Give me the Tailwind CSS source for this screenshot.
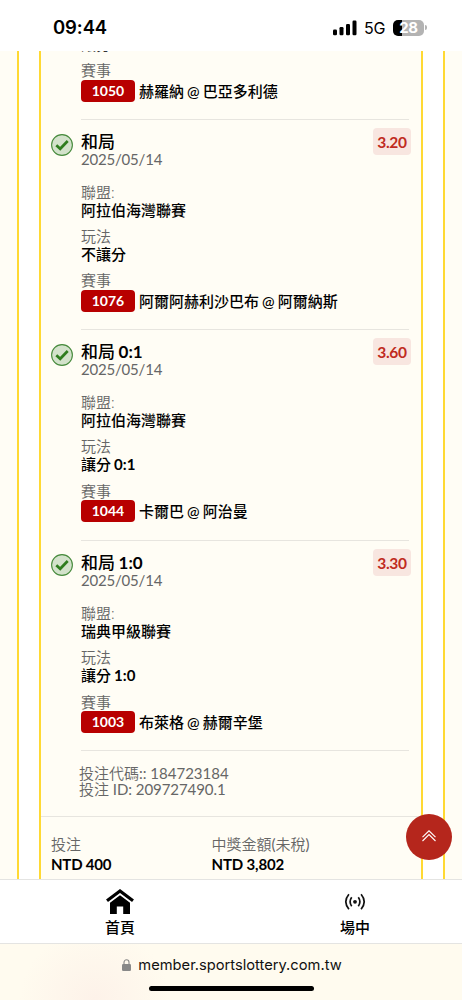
<!DOCTYPE html>
<html lang="zh-Hant">
<head>
<meta charset="utf-8">
<meta name="viewport" content="width=device-width, initial-scale=1">
<title>member.sportslottery.com.tw</title>
<script src="https://cdn.jsdelivr.net/npm/@tailwindcss/browser@4"></script>
</head>
<body class="bg-white">
<svg class="hidden">
  <symbol id="check" viewBox="0 0 22 22"><circle cx="11" cy="11" r="10.4" fill="#d3e2cb" stroke="#468a3c" stroke-width="1.1"/><path d="M5.3 11.3 9.2 14.800 16.700 7" fill="none" stroke="#2f7d1e" stroke-width="2.7"/></symbol>
</svg>
<div class="relative w-[462px] h-[1000px] overflow-hidden flex flex-col font-['Lato','Noto_Sans_CJK_TC',sans-serif] text-black">
  <header class="h-[51px] shrink-0 flex items-center pt-[4px] pl-[53px] pr-[35px] font-['Inter','Noto_Sans_CJK_TC',sans-serif]">
    <span class="text-[18.5px] font-semibold tracking-[-0.1px]">09:44</span>
    <div class="ml-auto flex items-center">
      <svg class="w-[24px] h-[16px]" viewBox="0 0 24 16"><rect x="0" y="9.5" width="4" height="5.7" rx="1.2"/><rect x="6.5" y="7" width="4" height="8.2" rx="1.2"/><rect x="13" y="4" width="4" height="11.2" rx="1.2"/><rect x="19.500" y=".5" width="4" height="14.700" rx="1.200"/></svg>
      <span class="mt-[1px] ml-[7px] w-[22px] text-[16px] tracking-[-0.3px]">5G</span>
      <div class="ml-[7px] w-[31px] h-[16px] rounded-[5px] bg-linear-to-r from-black from-[29%] to-[#b3b3b3] to-[29%] text-white text-[15px] font-bold leading-[16px] text-center tracking-[-0.3px]">28</div>
      <div class="ml-[1px] w-[2px] h-[5px] rounded-r-full bg-[#b3b3b3]"></div>
    </div>
  </header>

  <main class="h-[828px] shrink-0 overflow-hidden flex bg-[#fffdf5]">
    <div class="ml-[17.300px] w-[427.400px] h-full shrink-0 bg-white border-x-2 border-[#ffd933] pl-[19.700px] pr-[19.700px]">
      <div class="h-full w-[384px] bg-[#fffdf5] border-x-2 border-[#ffd933] flex flex-col">
        <section class="h-[69px] shrink-0 ml-[40px] mr-[12px] border-b border-[#e7e5df] text-[15px] [word-spacing:-0.7px]">
          <div class="h-[2px] overflow-hidden flex items-end font-medium leading-[18px] text-[#333]">讓分</div>
          <div class="mt-[8px] leading-[18px] font-[350] text-[#666]">賽事</div>
          <div class="mt-[1px] flex items-center h-[22px] font-medium"><span class="w-[54px] h-[22px] rounded-[4px] bg-[#b80000] text-white text-[14px] font-bold leading-[22px] text-center mr-[4px]">1050</span>赫羅納 @ 巴亞多利德</div>
        </section>

        <section class="h-[210.300px] shrink-0 pl-[10px] pr-[10px] flex">
          <svg class="w-[22px] h-[22px] mt-[13.500px] mr-[8px] shrink-0"><use href="#check"/></svg>
          <div class="flex-1 mr-[2px] border-b border-[#e7e5df] pt-[12px] text-[15px] leading-[18px] [word-spacing:-0.7px]">
            <div class="flex justify-between h-[20px]"><h2 class="text-[17px] leading-[20px] font-medium">和局</h2><span class="-mt-[4px] -mr-[2px] w-[38px] h-[27px] rounded-[4px] bg-[#f8e6e0] text-[#c02b20] text-[15.500px] tracking-[-0.3px] font-bold leading-[28px] text-center shrink-0">3.20</span></div>
            <div class="h-[15.500px] leading-[15.500px] text-[15px] tracking-[-0.2px] text-[#666]">2025/05/14</div>
            <div class="mt-[15px] font-[350] text-[#666]">聯盟:</div><div class="h-[18.300px] font-medium">阿拉伯海灣聯賽</div>
            <div class="mt-[8px] font-[350] text-[#666]">玩法</div><div class="h-[18.300px] font-medium">不讓分</div>
            <div class="mt-[8px] font-[350] text-[#666]">賽事</div>
            <div class="mt-[1px] flex items-center h-[22px] font-medium whitespace-nowrap"><span class="w-[54px] h-[22px] rounded-[4px] bg-[#b80000] text-white text-[14px] font-bold leading-[22px] text-center mr-[4px]">1076</span>阿爾阿赫利沙巴布 @ 阿爾納斯</div>
          </div>
        </section>

        <section class="h-[210.700px] shrink-0 pl-[10px] pr-[10px] flex">
          <svg class="w-[22px] h-[22px] mt-[13.500px] mr-[8px] shrink-0"><use href="#check"/></svg>
          <div class="flex-1 mr-[2px] border-b border-[#e7e5df] pt-[12px] text-[15px] leading-[18px] [word-spacing:-0.7px]">
            <div class="flex justify-between h-[20px]"><h2 class="text-[17px] leading-[20px] font-medium">和局 <b class="font-bold">0:1</b></h2><span class="-mt-[4px] -mr-[2px] w-[38px] h-[27px] rounded-[4px] bg-[#f8e6e0] text-[#c02b20] text-[15.500px] tracking-[-0.3px] font-bold leading-[28px] text-center shrink-0">3.60</span></div>
            <div class="h-[15.500px] leading-[15.500px] text-[15px] tracking-[-0.2px] text-[#666]">2025/05/14</div>
            <div class="mt-[15.300px] font-[350] text-[#666]">聯盟:</div><div class="h-[18.300px] font-medium">阿拉伯海灣聯賽</div>
            <div class="mt-[8px] font-[350] text-[#666]">玩法</div><div class="h-[18.300px] font-medium">讓分 <b class="font-bold">0:1</b></div>
            <div class="mt-[8px] font-[350] text-[#666]">賽事</div>
            <div class="mt-[.7px] flex items-center h-[22px] font-medium whitespace-nowrap"><span class="w-[54px] h-[22px] rounded-[4px] bg-[#b80000] text-white text-[14px] font-bold leading-[22px] text-center mr-[4px]">1044</span>卡爾巴 @ 阿治曼</div>
          </div>
        </section>

        <section class="h-[210.500px] shrink-0 pl-[10px] pr-[10px] flex">
          <svg class="w-[22px] h-[22px] mt-[13.500px] mr-[8px] shrink-0"><use href="#check"/></svg>
          <div class="flex-1 mr-[2px] border-b border-[#e7e5df] pt-[12px] text-[15px] leading-[18px] [word-spacing:-0.7px]">
            <div class="flex justify-between h-[20px]"><h2 class="text-[17px] leading-[20px] font-medium">和局 <b class="font-bold">1:0</b></h2><span class="-mt-[4px] -mr-[2px] w-[38px] h-[27px] rounded-[4px] bg-[#f8e6e0] text-[#c02b20] text-[15.500px] tracking-[-0.3px] font-bold leading-[28px] text-center shrink-0">3.30</span></div>
            <div class="h-[15.500px] leading-[15.500px] text-[15px] tracking-[-0.2px] text-[#666]">2025/05/14</div>
            <div class="mt-[15.500px] font-[350] text-[#666]">聯盟:</div><div class="h-[18.300px] font-medium">瑞典甲級聯賽</div>
            <div class="mt-[8px] font-[350] text-[#666]">玩法</div><div class="h-[18.300px] font-medium">讓分 <b class="font-bold">1:0</b></div>
            <div class="mt-[8px] font-[350] text-[#666]">賽事</div>
            <div class="mt-[.5px] flex items-center h-[22px] font-medium whitespace-nowrap"><span class="w-[54px] h-[22px] rounded-[4px] bg-[#b80000] text-white text-[14px] font-bold leading-[22px] text-center mr-[4px]">1003</span>布萊格 @ 赫爾辛堡</div>
          </div>
        </section>

        <div class="h-[65.500px] shrink-0 border-b border-[#e7e5df] pl-[38px] pt-[14px] text-[15px] leading-[16px] text-[#666] font-[350]">
          <div>投注代碼<span class="font-normal">:: 184723184</span></div><div class="tracking-[-0.07px]">投注 <span class="font-normal">ID: 209727490.1</span></div>
        </div>
        <div class="flex pl-[10px] pt-[17px] text-[15px] leading-[20px]">
          <div class="w-[160.500px]"><div class="text-[#666] font-[350]">投注</div><div class="font-bold tracking-[-0.2px]">NTD 400</div></div>
          <div><div class="text-[#666] font-[350]">中獎金額<span class="font-normal">(</span>未稅<span class="font-normal">)</span></div><div class="font-bold tracking-[-0.15px]">NTD 3,802</div></div>
        </div>
      </div>
    </div>
  </main>

  <nav class="h-[65px] shrink-0 flex border-y border-[#e4e4e2] bg-white text-[15px] font-medium">
    <div class="w-[240px] shrink-0 flex flex-col items-center pt-[9px]"><svg class="w-[28px] h-[26px]" viewBox="0 0 28 26"><path d="M1 11.800 14 2 27 11.800" fill="none" stroke="#000" stroke-width="3.200"/><path d="M4 13.700 14 6.300 24 13.700V25H17.200V17.500H10.800V25H4Z"/></svg><span class="leading-[24px]">首頁</span></div>
    <div class="w-[230px] shrink-0 flex flex-col items-center pt-[9px]"><svg class="w-[22px] h-[26px]" viewBox="0 0 22 26" fill="none" stroke="#111" stroke-width="1.700"><circle cx="11" cy="12.800" r="1.900" fill="#111" stroke="none"/><path d="M7.700 8.300Q4.500 12.800 7.700 17.300M14.300 8.300Q17.500 12.800 14.300 17.300M4.900 5.300Q-1.300 12.800 4.900 20.300M17.100 5.300Q23.300 12.800 17.100 20.300"/></svg><span class="leading-[24px]">場中</span></div>
  </nav>

  <footer class="flex-1 bg-[#fffbef] bg-[radial-gradient(ellipse_75px_70px_at_95px_55px,#fdf2e9,#fffbef)] flex flex-col items-center font-['Inter',sans-serif]">
    <div class="mt-[11px] ml-[2px] flex items-center h-[20px] text-[14.700px] text-[#111]"><svg class="w-[9px] h-[12px] mr-[7px]" viewBox="0 0 9 12"><rect y="5" width="9" height="7" rx="1.300" fill="#888"/><path d="M2 6V3.300a2.500 2.500 0 0 1 5 0V6" fill="none" stroke="#888" stroke-width="1.100"/></svg>member.sportslottery.com.tw</div>
    <div class="mt-[11px] w-[165px] h-[5px] rounded-full bg-black"></div>
  </footer>

  <button class="absolute left-[406px] top-[814px] w-[46px] h-[46px] rounded-full bg-[#b5261c] flex items-center justify-center"><svg class="w-[14px] h-[14px] -mt-[3px]" viewBox="0 0 14 14" fill="none" stroke="#fff" stroke-width="1.100"><path d="M.5 8.200 7 1.800 13.500 8.200M.5 12 7 5.600 13.500 12"/></svg></button>
</div>
</body>
</html>
